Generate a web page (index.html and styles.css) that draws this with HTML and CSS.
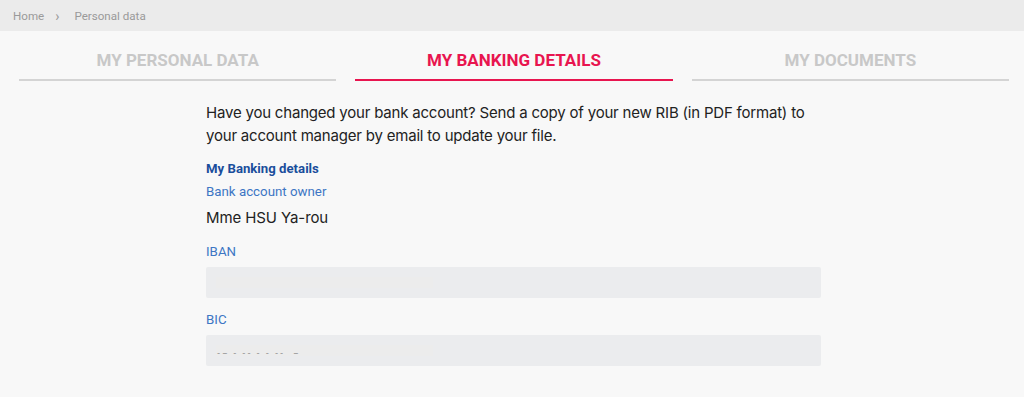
FILE: index.html
```html
<!DOCTYPE html>
<html lang="en">
<head>
  <meta charset="UTF-8">
  <meta name="viewport" content="width=device-width, initial-scale=1.0">
  <title>Personal data - My banking details</title>
  <link rel="stylesheet" href="styles.css">
</head>
<body>
  <nav class="breadcrumb">
    <a class="crumb" href="#">Home</a>
    <span class="crumb-sep">&#8250;</span>
    <span class="crumb current">Personal data</span>
  </nav>
  <div class="tabs">
    <button class="tab" type="button">My personal data</button>
    <button class="tab active" type="button">My banking details</button>
    <button class="tab" type="button">My documents</button>
  </div>
  <main class="content">
    <p class="intro">Have you changed your bank account? Send a copy of your new RIB (in PDF format) to your account manager by email to update your file.</p>
    <div class="section-title">My Banking details</div>
    <div class="field-label">Bank account owner</div>
    <div class="field-value">Mme HSU Ya-rou</div>
    <div class="field-label spaced">IBAN</div>
    <div class="field-box"><span class="masked"></span></div>
    <div class="field-label spaced">BIC</div>
    <div class="field-box"><span class="masked"><span class="masked-dots">-&ndash; - -- - - -- &nbsp;&ndash;</span></span></div>
  </main>
</body>
</html>
```

FILE: styles.css
```css
:root {
  --main-pink: #e8154f;
  --main-blue: #1a4e9c;
  --label-blue: #3d76c4;
  --tab-gray: #c8c8c8;
  --line-gray: #d4d4d4;
  --page-bg: #f8f8f8;
  --box-bg: #ebecee;
  --main-font: 'Roboto', Arial, sans-serif;
  --text-font: 'Inter', 'Liberation Sans', Arial, sans-serif;
}
html, body {
  margin: 0;
  padding: 0;
  background: var(--page-bg);
  color: #222;
  font-family: var(--main-font);
}
.breadcrumb {
  height: 31px;
  background: #ebebeb;
  display: flex;
  align-items: center;
  padding-left: 13px;
  font-size: 11.6px;
  color: #9a9a9a;
  box-sizing: border-box;
}
.crumb {
  color: #9a9a9a;
  text-decoration: none;
}
.crumb-sep {
  margin: 0 15px 0 11px;
  font-size: 14px;
  line-height: 1;
}
.tabs {
  display: grid;
  grid-template-columns: repeat(3, 1fr);
  column-gap: 19px;
  padding: 0 15px 0 19px;
  margin-top: 19px;
}
.tab {
  background: none;
  border: none;
  border-bottom: 2px solid var(--line-gray);
  font-family: var(--main-font);
  font-size: 17px;
  font-weight: 700;
  line-height: 20px;
  text-transform: uppercase;
  color: var(--tab-gray);
  padding: 0 0 9px 0;
  cursor: pointer;
}
.tab.active {
  color: var(--main-pink);
  border-bottom-color: var(--main-pink);
}
.content {
  width: 615px;
  margin: 20px 0 0 calc(50% - 306px);
}
.intro {
  font-family: var(--text-font);
  font-size: 15px;
  letter-spacing: -0.2px;
  line-height: 23px;
  margin: 0 0 12px 0;
  color: #222;
}
.section-title {
  font-size: 13.2px;
  font-weight: 700;
  color: var(--main-blue);
  line-height: 20px;
}
.field-label {
  font-size: 13.3px;
  color: var(--label-blue);
  line-height: 20px;
  margin-top: 3px;
}
.field-label.spaced {
  margin-top: 13px;
  margin-bottom: 5px;
}
.field-label.spaced + .field-box + .field-label.spaced {
  margin-top: 12px;
}
.field-value {
  font-family: var(--text-font);
  font-size: 15px;
  letter-spacing: -0.1px;
  line-height: 22px;
  margin-top: 5px;
}
.field-box {
  height: 31px;
  background: var(--box-bg);
  border-radius: 2px;
  padding: 10px 0 0 10px;
  box-sizing: border-box;
}
.masked {
  display: block;
  width: 217px;
  height: 11px;
  background: #ececec;
  position: relative;
}
.masked-dots {
  position: absolute;
  left: 1px;
  top: 3px;
  font-size: 8px;
  font-weight: 700;
  letter-spacing: 2px;
  color: #9a9a9a;
  line-height: 11px;
  white-space: nowrap;
}
```
